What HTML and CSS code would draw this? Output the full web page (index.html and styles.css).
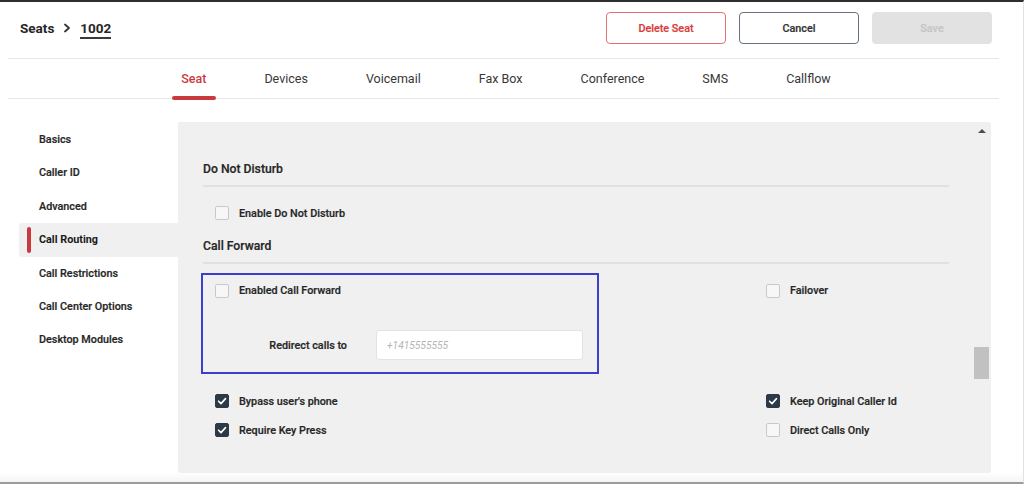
FILE: index.html
```html
<!DOCTYPE html>
<html lang="en">
<head>
<meta charset="utf-8">
<title>Seat 1002</title>
<link rel="stylesheet" href="styles.css">
</head>
<body>
<div class="frame">
  <div class="main">
    <header class="topbar">
      <div class="crumbs">
        <span class="crumb">Seats</span>
        <svg class="chev" width="8" height="10" viewBox="0 0 8 10"><polyline points="2,1.5 6,5 2,8.5" fill="none" stroke="#333" stroke-width="1.8" stroke-linecap="round" stroke-linejoin="round"/></svg>
        <span class="crumb current">1002</span>
      </div>
      <div class="actions">
        <button class="btn btn-danger">Delete Seat</button>
        <button class="btn btn-outline">Cancel</button>
        <button class="btn btn-disabled">Save</button>
      </div>
    </header>

    <nav class="tabs">
      <a class="tab active">Seat</a>
      <a class="tab">Devices</a>
      <a class="tab">Voicemail</a>
      <a class="tab">Fax Box</a>
      <a class="tab">Conference</a>
      <a class="tab">SMS</a>
      <a class="tab">Callflow</a>
    </nav>

    <div class="content">
      <aside class="sidenav">
        <a class="side-item">Basics</a>
        <a class="side-item">Caller ID</a>
        <a class="side-item">Advanced</a>
        <a class="side-item active">Call Routing</a>
        <a class="side-item">Call Restrictions</a>
        <a class="side-item">Call Center Options</a>
        <a class="side-item">Desktop Modules</a>
      </aside>

      <section class="panel">
        <h3 class="section-title">Do Not Disturb</h3>
        <label class="option dnd">
          <span class="check"></span><span class="opt-label">Enable Do Not Disturb</span>
        </label>

        <h3 class="section-title cf-title">Call Forward</h3>
        <div class="cf-grid">
          <div class="highlight">
            <label class="option">
              <span class="check"></span><span class="opt-label">Enabled Call Forward</span>
            </label>
            <div class="redirect">
              <span class="redirect-label">Redirect calls to</span>
              <input class="text-input" type="text" placeholder="+1415555555">
            </div>
          </div>
          <div class="right-cell first">
            <label class="option">
              <span class="check"></span><span class="opt-label">Failover</span>
            </label>
          </div>

          <label class="option">
            <span class="check checked"><svg viewBox="0 0 14 14" width="14" height="14"><path d="M3.6 7.2 L6 9.6 L10.5 4.6" fill="none" stroke="#fff" stroke-width="1.6" stroke-linecap="round" stroke-linejoin="round"/></svg></span><span class="opt-label">Bypass user's phone</span>
          </label>
          <label class="option">
            <span class="check checked"><svg viewBox="0 0 14 14" width="14" height="14"><path d="M3.6 7.2 L6 9.6 L10.5 4.6" fill="none" stroke="#fff" stroke-width="1.6" stroke-linecap="round" stroke-linejoin="round"/></svg></span><span class="opt-label">Keep Original Caller Id</span>
          </label>

          <label class="option">
            <span class="check checked"><svg viewBox="0 0 14 14" width="14" height="14"><path d="M3.6 7.2 L6 9.6 L10.5 4.6" fill="none" stroke="#fff" stroke-width="1.6" stroke-linecap="round" stroke-linejoin="round"/></svg></span><span class="opt-label">Require Key Press</span>
          </label>
          <label class="option">
            <span class="check"></span><span class="opt-label">Direct Calls Only</span>
          </label>
        </div>

        <div class="scrollbar">
          <span class="scroll-up"></span>
          <span class="scroll-thumb"></span>
        </div>
      </section>
    </div>
  </div>
</div>
</body>
</html>
```

FILE: styles.css
```css
* { box-sizing: border-box; }

html, body {
  margin: 0;
  padding: 0;
  background: #ffffff;
}

body {
  font-family: Roboto, "Liberation Sans", sans-serif;
  color: #333;
}

.frame {
  width: 1024px;
  height: 484px;
  border-top: 2px solid #2e2e2e;
  border-bottom: 2px solid #9c9c9c;
  border-right: 1px solid #e2e2e2;
  background: linear-gradient(to bottom, #ffffff 0, #ffffff 470px, #f3f3f3 482px);
  overflow: hidden;
}

.main {
  margin: 0 24px 0 8px;
}

/* top bar */
.topbar {
  display: flex;
  align-items: center;
  justify-content: space-between;
  padding: 10px 7px 14px 12px;
  border-bottom: 1px solid #e6e6e6;
}

.crumbs {
  display: flex;
  align-items: center;
}

.crumb {
  font-size: 13.5px;
  font-weight: 700;
  color: #262626;
  line-height: 16px;
}

.crumb.current {
  border-bottom: 2px solid #3a3a3a;
  padding-bottom: 1px;
  margin-top: 3px;
}

.chev {
  margin: 0 9px 0 9px;
}

.actions {
  display: flex;
  gap: 13px;
}

.btn {
  width: 120px;
  height: 32px;
  border-radius: 4px;
  font-family: Roboto, "Liberation Sans", sans-serif;
  font-size: 10.8px;
  font-weight: 500;
  background: #fff;
  padding: 0;
  -webkit-text-stroke: 0.2px currentColor;
}

.btn-danger {
  border: 1px solid #e27272;
  color: #d93c3c;
}

.btn-outline {
  border: 1px solid #66717c;
  color: #333;
}

.btn-disabled {
  border: none;
  background: #e2e2e2;
  color: #c6c6c6;
}

/* tabs */
.tabs {
  display: flex;
  justify-content: center;
  padding-left: 5px;
  border-bottom: 1px solid #e6e6e6;
}

.tab {
  position: relative;
  height: 39px;
  line-height: 39px;
  padding: 0 29px;
  font-size: 12.5px;
  color: #383838;
}

.tab.active {
  color: #c93a3f;
  font-weight: 500;
}

.tab.active::after {
  content: "";
  position: absolute;
  left: 50%;
  bottom: -2px;
  width: 44px;
  height: 4px;
  margin-left: -22px;
  border-radius: 2px;
  background: #c93a3f;
}

/* content */
.content {
  display: flex;
  margin-top: 23px;
  padding: 0 8px 0 11px;
}

.sidenav {
  width: 159px;
  flex: none;
  display: flex;
  flex-direction: column;
  padding-top: 1px;
}

.side-item {
  position: relative;
  height: 33.4px;
  line-height: 33.4px;
  padding-left: 20px;
  font-size: 10.8px;
  font-weight: 500;
  color: #262626;
  -webkit-text-stroke: 0.2px currentColor;
}

.side-item.active {
  background: #f0f0f0;
  border-radius: 3px 0 0 3px;
  font-weight: 700;
  color: #1a1a1a;
  -webkit-text-stroke: 0;
}

.side-item.active::before {
  content: "";
  position: absolute;
  left: 8px;
  top: 4px;
  bottom: 4px;
  width: 4px;
  border-radius: 2px;
  background: #c93a3f;
}

.panel {
  position: relative;
  flex: 1;
  height: 351px;
  background: #f0f0f0;
  border-radius: 0 3px 3px 3px;
  padding: 38px 42px 0 25px;
}

.section-title {
  margin: 0;
  font-size: 12.2px;
  font-weight: 500;
  line-height: 18px;
  color: #262626;
  padding-bottom: 7px;
  border-bottom: 2px solid #e1e1e1;
  -webkit-text-stroke: 0.2px currentColor;
}

.cf-title {
  margin-top: 9.5px;
}

.option {
  display: flex;
  align-items: center;
  height: 29px;
  padding-left: 12px;
}

.option.dnd {
  margin-top: 11.5px;
}

.check {
  width: 14px;
  height: 14px;
  flex: none;
  border: 1px solid #c9c9c9;
  border-radius: 2px;
  background: #f7f7f7;
  display: flex;
}

.check.checked {
  background: #2c3a47;
  border-color: #2c3a47;
}

.check svg {
  margin: -1px;
}

.opt-label {
  margin-left: 10px;
  font-size: 10.8px;
  font-weight: 500;
  color: #262626;
  -webkit-text-stroke: 0.2px currentColor;
}

.cf-grid {
  display: grid;
  grid-template-columns: 1fr 195px;
  margin-top: 9px;
}

.highlight {
  width: 398px;
  margin-left: -2px;
  margin-bottom: 12.5px;
  border: 2px solid #3c40c8;
  padding: 1px 12px 12px 12px;
}

.highlight .option {
  padding-left: 0;
}

.right-cell.first {
  padding-top: 3px;
}

.redirect {
  display: flex;
  align-items: center;
  margin-top: 25px;
}

.redirect-label {
  width: 132px;
  text-align: right;
  font-size: 10.8px;
  font-weight: 500;
  color: #262626;
  -webkit-text-stroke: 0.2px currentColor;
}

.text-input {
  margin-left: 29px;
  width: 207px;
  height: 30px;
  border: 1px solid #e3e3e3;
  border-radius: 3px;
  background: #fff;
  padding: 0 10px;
  font-family: Roboto, "Liberation Sans", sans-serif;
  font-size: 10.2px;
  font-style: italic;
  color: #333;
  outline: none;
}

.text-input::placeholder {
  color: #b4b4b4;
}

/* scrollbar drawn over the panel */
.scrollbar {
  position: absolute;
  top: 0;
  right: 2px;
  bottom: 0;
  width: 15px;
  display: flex;
  flex-direction: column;
  align-items: center;
}

.scroll-up {
  margin-top: 7px;
  width: 0;
  height: 0;
  border-left: 4px solid transparent;
  border-right: 4px solid transparent;
  border-bottom: 4px solid #4e4e4e;
}

.scroll-thumb {
  margin-top: 214px;
  width: 15px;
  height: 32px;
  background: #c1c1c1;
}
```
